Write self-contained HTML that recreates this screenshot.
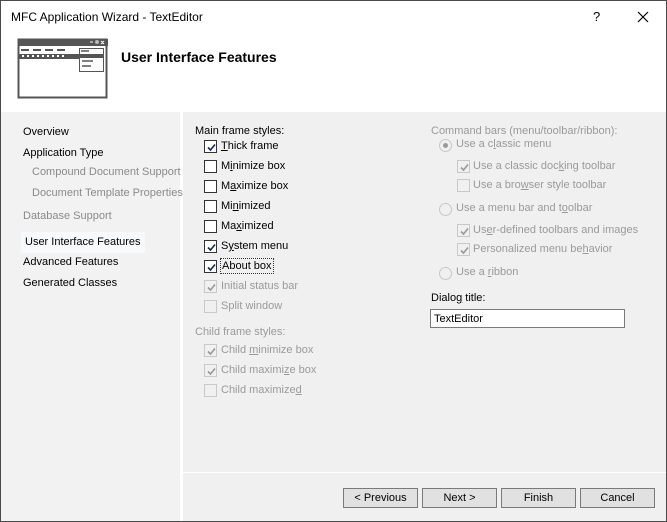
<!DOCTYPE html>
<html><head><meta charset="utf-8"><style>
*{margin:0;padding:0;box-sizing:border-box}
body{width:667px;height:522px;overflow:hidden;font-family:"Liberation Sans",sans-serif;font-size:11px;color:#000;background:#f0f0f0;position:relative}
#win{position:absolute;left:0;top:0;width:667px;height:522px;border:1px solid #4a4a4a;background:#f0f0f0}
.a{position:absolute;white-space:nowrap;line-height:14px;margin-top:-1px}
.g{color:#8a8a8a}
.d{color:#9a9a9a}
.cb{position:absolute;width:13px;height:13px;border:1px solid #333;background:#fff}
.cb.dis{border-color:#c8c8c8;background:#f0f0f0}
.cb svg{position:absolute;left:1px;top:1px}
.rd{position:absolute;width:13px;height:13px;border-radius:50%;border:1px solid #c8c8c8;background:#f0f0f0}
.rd.on::after{content:"";position:absolute;left:3px;top:3px;width:5px;height:5px;border-radius:50%;background:#9a9a9a}
.btn{position:absolute;top:487px;width:75px;height:20px;border:1px solid #7a7a7a;background:#e1e1e1;text-align:center;line-height:18px}
u{text-decoration:underline}
</style></head><body><div id="win">
<div style="position:absolute;left:0;top:0;width:665px;height:111px;background:#fff"></div>
<div class="a" style="left:10px;top:10px;font-size:12px;">MFC Application Wizard - TextEditor</div>
<div class="a" style="left:592px;top:10px;font-size:13px">?</div>
<svg style="position:absolute;left:636px;top:10px" width="12" height="12"><path d="M1 1L11 11M11 1L1 11" stroke="#000" stroke-width="1.2"/></svg>
<svg style="position:absolute;left:16px;top:37px" width="92" height="62">
<rect x="1.5" y="1.5" width="88" height="58" fill="#fff" stroke="#555" stroke-width="2"/>
<rect x="1" y="1" width="90" height="7" fill="#555"/>
<rect x="1" y="16" width="70" height="5" fill="#555"/>
<path d="M4 12h8M16 12h8M28 12h8M40 12h8" stroke="#555" stroke-width="2"/>
<path d="M5 18h2M10 18h2M15 18h2M20 18h2M25 18h2M30 18h2M35 18h2M40 18h2M45 18h2" stroke="#fff" stroke-width="2"/>
<rect x="62.5" y="10.5" width="24" height="23" fill="#fff" stroke="#555"/>
<rect x="62" y="16" width="25" height="4" fill="#555"/>
<path d="M64 13h8M65 23h11M65 28h9" stroke="#555" stroke-width="1.5"/>
<path d="M73 4h3M79 3h2v2h-2zM84 3l3 3M87 3l-3 3" stroke="#fff" stroke-width="1"/>
</svg>
<div class="a" style="left:120px;top:50px;font-weight:bold;font-size:14px">User Interface Features</div>

<div style="position:absolute;left:0;top:111px;width:179px;height:409px;background:#f2f2f2"></div>
<div style="position:absolute;left:179px;top:111px;width:3px;height:409px;background:#fff"></div>
<div style="position:absolute;left:182px;top:471px;width:483px;height:1px;background:#fff"></div>

<div class="a" style="left:22px;top:125px">Overview</div>
<div class="a" style="left:22px;top:146px">Application Type</div>
<div class="a g" style="left:31px;top:165px">Compound Document Support</div>
<div class="a g" style="left:31px;top:186px">Document Template Properties</div>
<div class="a g" style="left:22px;top:209px">Database Support</div>
<div style="position:absolute;left:20px;top:231px;width:124px;height:21px;background:#f7f9fb"></div>
<div class="a" style="left:24px;top:235px">User Interface Features</div>
<div class="a" style="left:22px;top:255px">Advanced Features</div>
<div class="a" style="left:22px;top:276px">Generated Classes</div>

<div class="a" style="left:194px;top:124px">Main frame styles:</div>
<div class="cb" style="left:203px;top:139px"><svg width="11" height="11"><path d="M2 5.5L4.5 8L9 2.5" fill="none" stroke="#1a2a50" stroke-width="1.6"/></svg></div>
<div class="a" style="left:220px;top:139px"><u>T</u>hick frame</div>
<div class="cb" style="left:203px;top:159px"></div><div class="a" style="left:220px;top:159px">M<u>i</u>nimize box</div>
<div class="cb" style="left:203px;top:179px"></div><div class="a" style="left:220px;top:179px">M<u>a</u>ximize box</div>
<div class="cb" style="left:203px;top:199px"></div><div class="a" style="left:220px;top:199px">Mi<u>n</u>imized</div>
<div class="cb" style="left:203px;top:219px"></div><div class="a" style="left:220px;top:219px">Ma<u>x</u>imized</div>
<div class="cb" style="left:203px;top:239px"><svg width="11" height="11"><path d="M2 5.5L4.5 8L9 2.5" fill="none" stroke="#1a2a50" stroke-width="1.6"/></svg></div>
<div class="a" style="left:220px;top:239px">S<u>y</u>stem menu</div>
<div class="cb" style="left:203px;top:259px"><svg width="11" height="11"><path d="M2 5.5L4.5 8L9 2.5" fill="none" stroke="#1a2a50" stroke-width="1.6"/></svg></div>
<div class="a" style="left:219px;top:258px;border:1px dotted #333;padding:0 1px">About box</div>
<div class="cb dis" style="left:203px;top:279px"><svg width="11" height="11"><path d="M2 5.5L4.5 8L9 2.5" fill="none" stroke="#999" stroke-width="1.6"/></svg></div>
<div class="a d" style="left:220px;top:279px">Initial status bar</div>
<div class="cb dis" style="left:203px;top:299px"></div><div class="a d" style="left:220px;top:299px">Split window</div>
<div class="a d" style="left:194px;top:325px">Child frame styles:</div>
<div class="cb dis" style="left:203px;top:343px"><svg width="11" height="11"><path d="M2 5.5L4.5 8L9 2.5" fill="none" stroke="#999" stroke-width="1.6"/></svg></div>
<div class="a d" style="left:220px;top:343px">Child <u>m</u>inimize box</div>
<div class="cb dis" style="left:203px;top:363px"><svg width="11" height="11"><path d="M2 5.5L4.5 8L9 2.5" fill="none" stroke="#999" stroke-width="1.6"/></svg></div>
<div class="a d" style="left:220px;top:363px">Child maximi<u>z</u>e box</div>
<div class="cb dis" style="left:203px;top:383px"></div><div class="a d" style="left:220px;top:383px">Child maximize<u>d</u></div>

<div class="a d" style="left:430px;top:124px">Command bars (menu/toolbar/ribbon):</div>
<div class="rd on" style="left:438px;top:138px"></div><div class="a d" style="left:455px;top:137px">Use a c<u>l</u>assic menu</div>
<div class="cb dis" style="left:456px;top:159px"><svg width="11" height="11"><path d="M2 5.5L4.5 8L9 2.5" fill="none" stroke="#999" stroke-width="1.6"/></svg></div>
<div class="a d" style="left:472px;top:159px">Use a classic doc<u>k</u>ing toolbar</div>
<div class="cb dis" style="left:456px;top:178px"></div><div class="a d" style="left:472px;top:178px">Use a bro<u>w</u>ser style toolbar</div>
<div class="rd" style="left:438px;top:202px"></div><div class="a d" style="left:455px;top:201px">Use a menu bar and t<u>o</u>olbar</div>
<div class="cb dis" style="left:456px;top:223px"><svg width="11" height="11"><path d="M2 5.5L4.5 8L9 2.5" fill="none" stroke="#999" stroke-width="1.6"/></svg></div>
<div class="a d" style="left:472px;top:223px">Us<u>e</u>r-defined toolbars and images</div>
<div class="cb dis" style="left:456px;top:242px"><svg width="11" height="11"><path d="M2 5.5L4.5 8L9 2.5" fill="none" stroke="#999" stroke-width="1.6"/></svg></div>
<div class="a d" style="left:472px;top:242px">Personalized menu be<u>h</u>avior</div>
<div class="rd" style="left:438px;top:266px"></div><div class="a d" style="left:455px;top:265px">Use a <u>r</u>ibbon</div>
<div class="a" style="left:430px;top:291px">Dialo<u>g</u> title:</div>
<div style="position:absolute;left:429px;top:308px;width:195px;height:19px;border:1px solid #7a7a7a;background:#fff"></div>
<div class="a" style="left:433px;top:312px">TextEditor</div>

<div class="btn" style="left:342px">&lt; Previous</div>
<div class="btn" style="left:421px">Next &gt;</div>
<div class="btn" style="left:500px">Finish</div>
<div class="btn" style="left:579px">Cancel</div>
</div></body></html>
